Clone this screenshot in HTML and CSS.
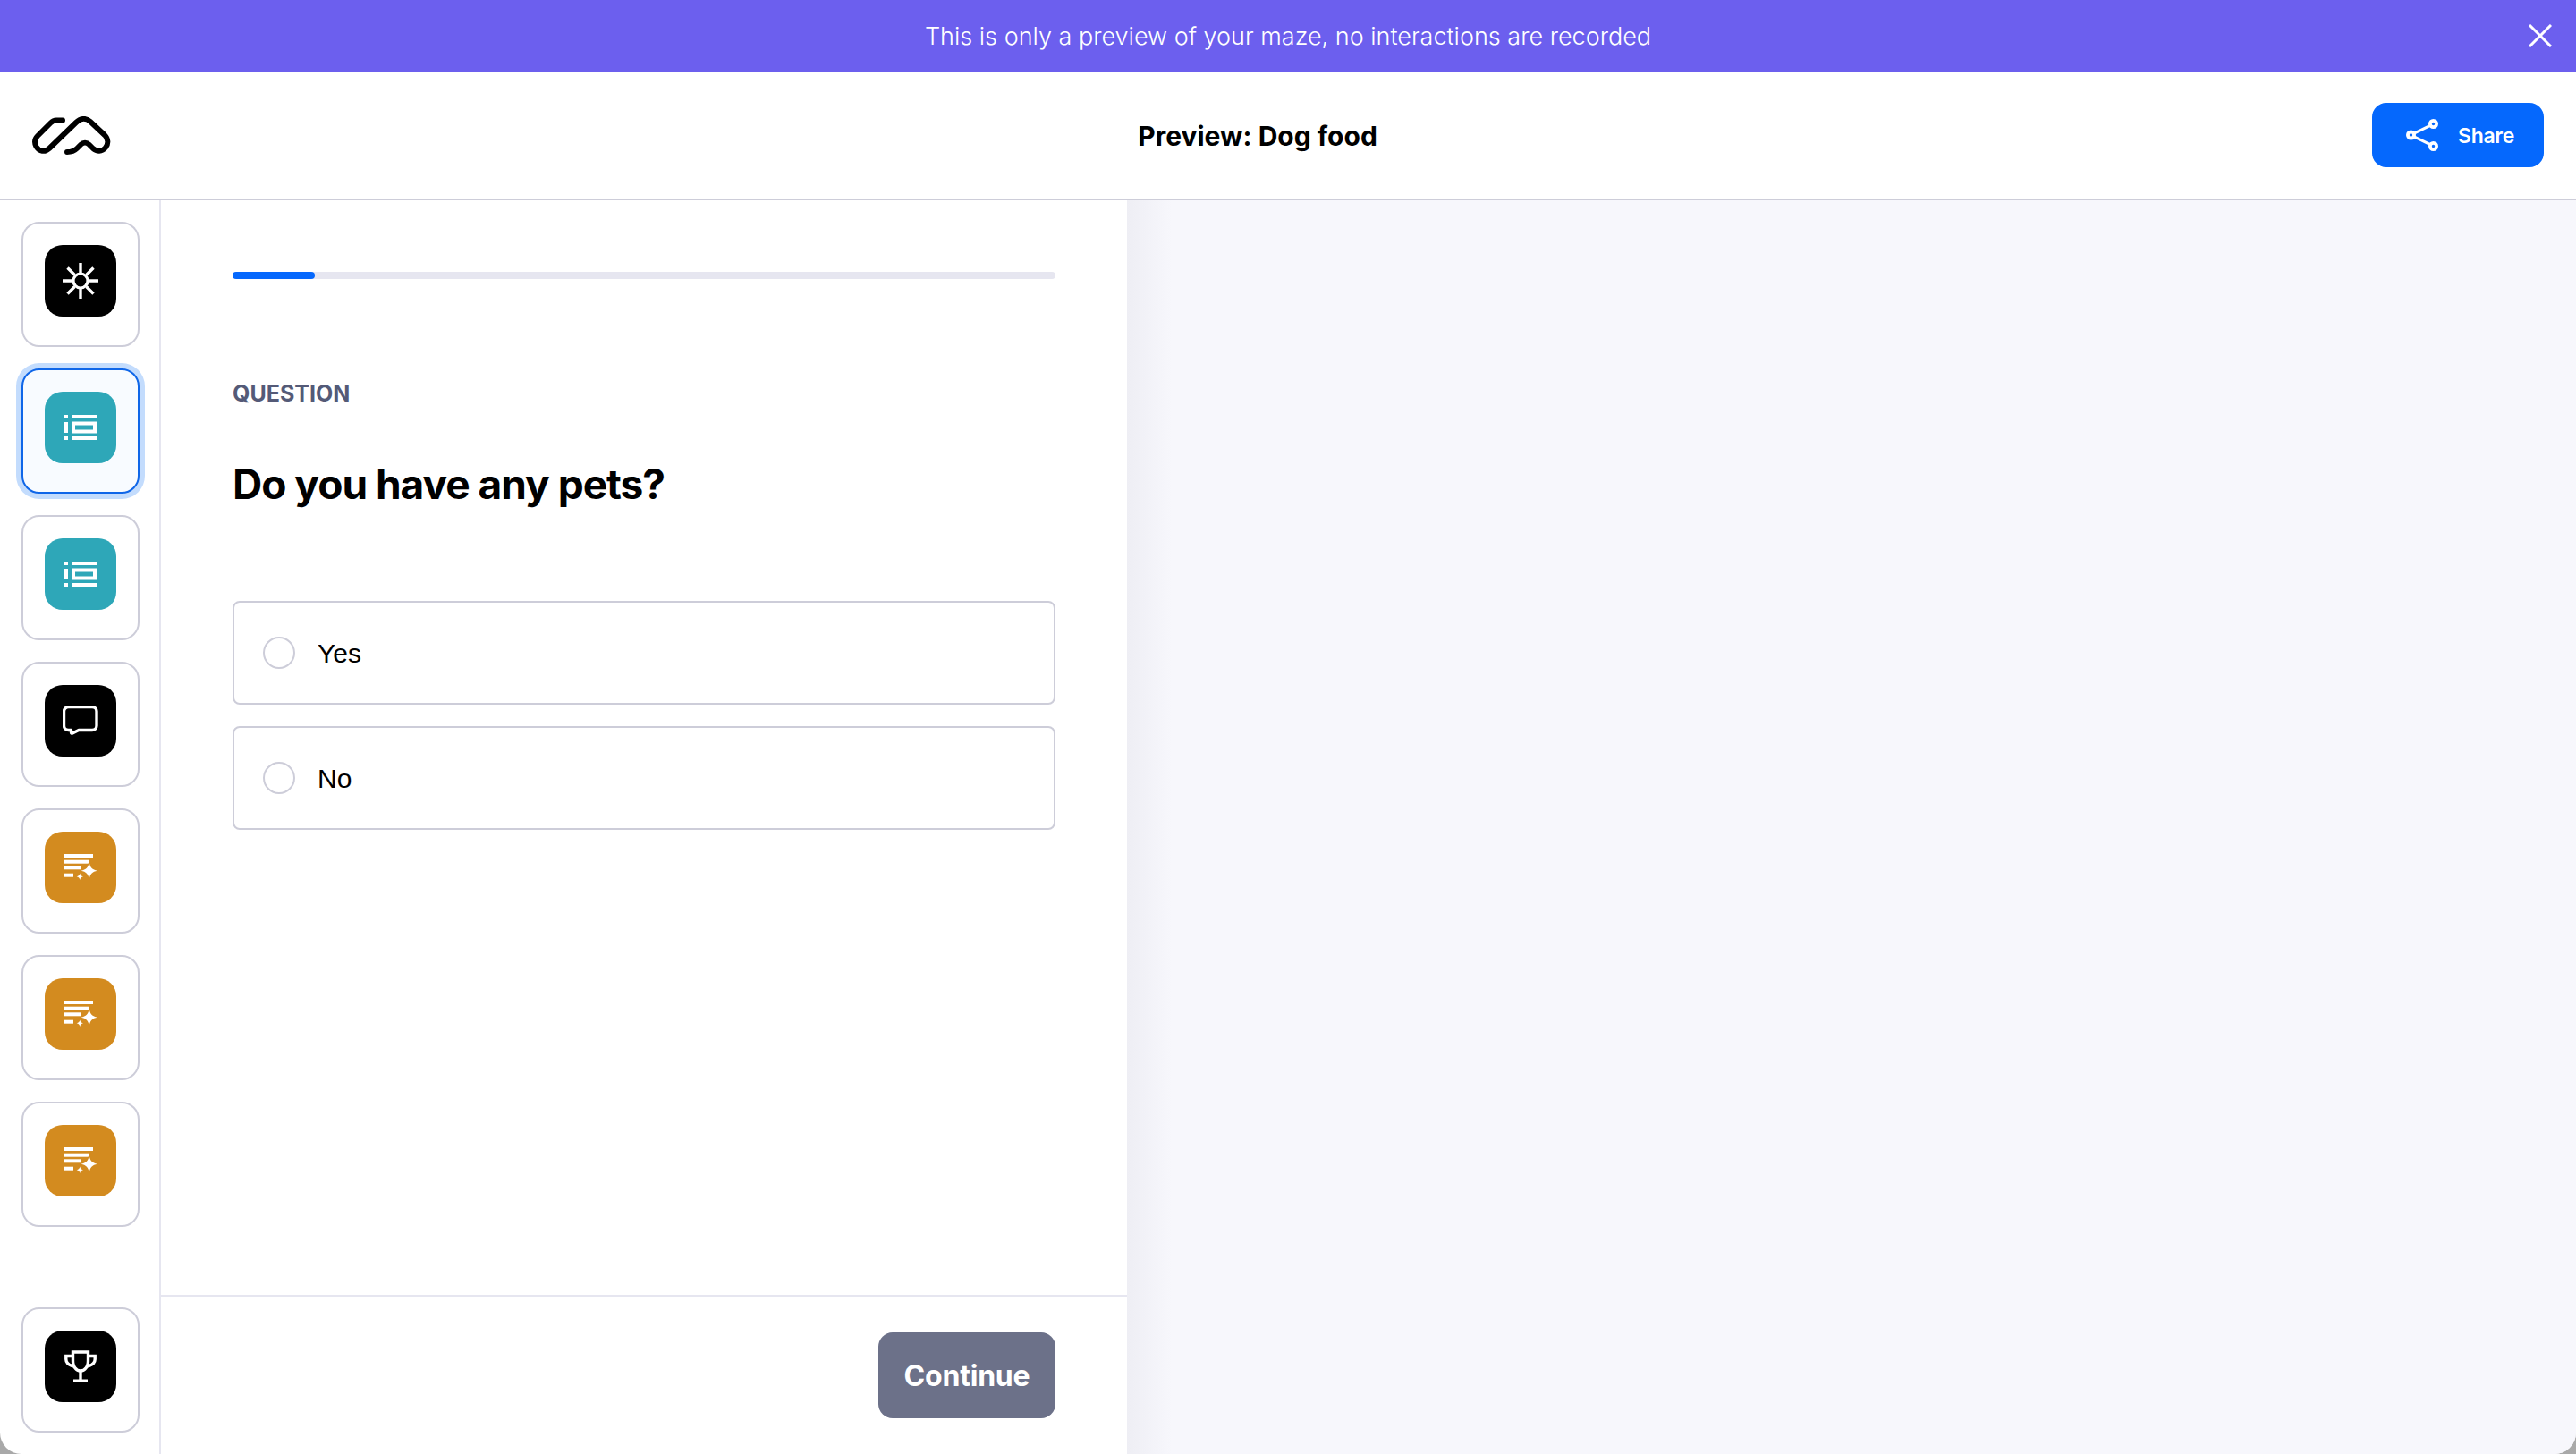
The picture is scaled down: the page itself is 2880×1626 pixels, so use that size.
FILE: index.html
```html
<!DOCTYPE html>
<html lang="en">
<head>
  <meta charset="UTF-8" />
  <meta name="viewport" content="width=device-width, initial-scale=1.0" />
  <title>Preview: Dog food</title>
  <link rel="stylesheet" href="styles.css">
</head>
<body>
  <div class="window">
    <div class="banner">
      <span>This is only a preview of your maze, no interactions are recorded</span>
      <button class="close" aria-label="Close">
        <svg viewBox="0 0 26 26" width="26" height="26"><path d="M1 1 25 25M25 1 1 25" stroke="#fff" stroke-width="3" fill="none"/></svg>
      </button>
    </div>

    <header class="topbar">
      <div class="logo">
        <svg viewBox="0 0 88 43" width="88" height="43">
          <path d="M34 4.500H27C24 4.500 22.500 5.500 20.500 7.500L6 22C2.500 25.500 2.500 30 4.500 34C8 39.500 14 40.500 19 36L49 7C54 2 60 1.500 65 6L81 21C85 25 85.500 31 82 35C78 40 72 39.500 68 36L63.500 31.500C61 29 57 29 54.500 31.500L50 36C47 39 44 40 39 40" fill="none" stroke="#000" stroke-width="6" stroke-linecap="round" stroke-linejoin="round"/>
        </svg>
      </div>
      <div class="page-title">Preview: Dog food</div>
      <button class="share">
        <svg viewBox="0 0 36 36" width="36" height="36">
          <g fill="none" stroke="#fff">
            <path d="M9 16.200 27 7.300M9 19.800l18 8.900" stroke-width="3"/>
            <g stroke-width="3.800">
              <circle cx="5.500" cy="18" r="3.600"/>
              <circle cx="30.500" cy="5.500" r="3.600"/>
              <circle cx="30.500" cy="30.500" r="3.600"/>
            </g>
          </g>
        </svg>
        <span class="share-label">Share</span>
      </button>
    </header>

    <div class="main">
      <nav class="steps">
        <div class="step">
          <div class="step-icon black">
            <svg viewBox="0 0 40 40" width="40" height="40">
              <circle cx="20" cy="20" r="8" fill="none" stroke="#fff" stroke-width="3.2"/>
              <path d="M20 0v11M20 29v11M0 20h11M29 20h11M5.500 5.500l8 8M26.500 26.500l8 8M34.500 5.500l-8 8M13.500 26.500l-8 8" stroke="#fff" stroke-width="3.400"/>
            </svg>
          </div>
        </div>
        <div class="step active">
          <div class="step-icon teal">
            <svg viewBox="0 0 36 28" width="36" height="28">
              <g fill="#fff">
                <rect x="0" y="0" width="4" height="4"/>
                <rect x="0" y="8" width="4" height="12"/>
                <rect x="0" y="24" width="4" height="4"/>
                <rect x="8" y="0" width="28" height="4"/>
                <rect x="8" y="24" width="28" height="4"/>
              </g>
              <rect x="10" y="9.500" width="24" height="9" fill="none" stroke="#fff" stroke-width="4"/>
            </svg>
          </div>
        </div>
        <div class="step">
          <div class="step-icon teal">
            <svg viewBox="0 0 36 28" width="36" height="28">
              <g fill="#fff">
                <rect x="0" y="0" width="4" height="4"/>
                <rect x="0" y="8" width="4" height="12"/>
                <rect x="0" y="24" width="4" height="4"/>
                <rect x="8" y="0" width="28" height="4"/>
                <rect x="8" y="24" width="28" height="4"/>
              </g>
              <rect x="10" y="9.500" width="24" height="9" fill="none" stroke="#fff" stroke-width="4"/>
            </svg>
          </div>
        </div>
        <div class="step">
          <div class="step-icon black">
            <svg viewBox="0 0 40 34" width="40" height="34">
              <path d="M7 1.500H33a5 5 0 0 1 5 5V22.500a5 5 0 0 1-5 5H18L11 31c-.8.400-1.500 0-1.500-1V27.500H6.500a5 5 0 0 1-5-5V6.500a5 5 0 0 1 5-5z" fill="none" stroke="#fff" stroke-width="3.400" stroke-linejoin="round"/>
            </svg>
          </div>
        </div>
        <div class="step">
          <div class="step-icon amber">
            <svg viewBox="0 0 38 30" width="38" height="30">
              <g fill="#fff">
                <rect x="0" y="0" width="33" height="4"/>
                <rect x="0" y="6.700" width="28" height="4"/>
                <rect x="0" y="13.300" width="19" height="4"/>
                <rect x="0" y="21.700" width="11" height="4"/>
                <path d="M18.300 21.600c.4 2.300 1.400 3.300 3.700 3.700-2.300.4-3.300 1.400-3.700 3.700-.4-2.300-1.400-3.300-3.700-3.700 2.300-.4 3.300-1.400 3.700-3.700z"/>
                <path d="M28.700 9.300c1 5.700 3.300 8.400 9.300 9.400-6 1-8.300 3.700-9.300 9.400-1-5.700-3.300-8.400-9.300-9.400 6-1 8.300-3.700 9.300-9.400z" stroke="#d38b1f" stroke-width="1.200" paint-order="stroke"/>
              </g>
            </svg>
          </div>
        </div>
        <div class="step">
          <div class="step-icon amber">
            <svg viewBox="0 0 38 30" width="38" height="30">
              <g fill="#fff">
                <rect x="0" y="0" width="33" height="4"/>
                <rect x="0" y="6.700" width="28" height="4"/>
                <rect x="0" y="13.300" width="19" height="4"/>
                <rect x="0" y="21.700" width="11" height="4"/>
                <path d="M18.300 21.600c.4 2.300 1.400 3.300 3.700 3.700-2.300.4-3.300 1.400-3.700 3.700-.4-2.300-1.400-3.300-3.700-3.700 2.300-.4 3.300-1.400 3.700-3.700z"/>
                <path d="M28.700 9.300c1 5.700 3.300 8.400 9.300 9.400-6 1-8.300 3.700-9.300 9.400-1-5.700-3.300-8.400-9.300-9.400 6-1 8.300-3.700 9.300-9.400z" stroke="#d38b1f" stroke-width="1.200" paint-order="stroke"/>
              </g>
            </svg>
          </div>
        </div>
        <div class="step">
          <div class="step-icon amber">
            <svg viewBox="0 0 38 30" width="38" height="30">
              <g fill="#fff">
                <rect x="0" y="0" width="33" height="4"/>
                <rect x="0" y="6.700" width="28" height="4"/>
                <rect x="0" y="13.300" width="19" height="4"/>
                <rect x="0" y="21.700" width="11" height="4"/>
                <path d="M18.300 21.600c.4 2.300 1.400 3.300 3.700 3.700-2.300.4-3.300 1.400-3.700 3.700-.4-2.300-1.400-3.300-3.700-3.700 2.300-.4 3.300-1.400 3.700-3.700z"/>
                <path d="M28.700 9.300c1 5.700 3.300 8.400 9.300 9.400-6 1-8.300 3.700-9.300 9.400-1-5.700-3.300-8.400-9.300-9.400 6-1 8.300-3.700 9.300-9.400z" stroke="#d38b1f" stroke-width="1.200" paint-order="stroke"/>
              </g>
            </svg>
          </div>
        </div>
        <div class="step last">
          <div class="step-icon black">
            <svg viewBox="0 0 36 36" width="36" height="36">
              <g fill="none" stroke="#fff" stroke-width="3.400">
                <path d="M9.500 2H26.500V12C26.500 18 23 23 18 23C13 23 9.500 18 9.500 12Z"/>
                <path d="M9.500 6.500H1.800V10C1.800 14 4.500 16.500 10 18M26.500 6.500H34.200V10C34.200 14 31.500 16.500 26 18"/>
                <path d="M18 23V34M10 34.300H26"/>
              </g>
            </svg>
          </div>
        </div>
      </nav>

      <section class="panel">
        <div class="panel-body">
          <div class="progress"><div class="progress-fill"></div></div>
          <div class="eyebrow">QUESTION</div>
          <h1 class="question">Do you have any pets?</h1>
          <div class="options">
            <label class="option"><span class="radio"></span><span class="option-text">Yes</span></label>
            <label class="option"><span class="radio"></span><span class="option-text">No</span></label>
          </div>
        </div>
        <div class="panel-footer">
          <button class="continue">Continue</button>
        </div>
      </section>

      <div class="preview"></div>
    </div>
  </div>
</body>
</html>
```

FILE: styles.css
```css
html, body {
  margin: 0;
  padding: 0;
  height: 100%;
}
body {
  background: #a9a9a9;
  font-family: Inter, Arial, sans-serif;
  color: #000;
  overflow: hidden;
}
button {
  font-family: inherit;
  border: none;
  cursor: pointer;
}
.window {
  height: 1626px;
  display: flex;
  flex-direction: column;
  background: #fff;
  border-radius: 0 0 24px 24px;
  overflow: hidden;
}
.banner {
  position: relative;
  height: 80px;
  flex: none;
  display: flex;
  align-items: center;
  justify-content: center;
  background: #6c5fee;
  color: #fff;
  font-size: 27px;
  font-weight: 300;
}
.close {
  position: absolute;
  right: 27px;
  top: 27px;
  width: 26px;
  height: 26px;
  padding: 0;
  background: none;
  display: flex;
}
.topbar {
  height: 144px;
  flex: none;
  box-sizing: border-box;
  display: flex;
  align-items: center;
  justify-content: space-between;
  padding: 0 36px;
  border-bottom: 2px solid #cdcdd9;
}
.logo {
  width: 124px;
  display: flex;
}
.page-title {
  font-size: 30px;
  font-weight: 700;
  margin-top: 2px;
}
.share {
  width: 192px;
  height: 72px;
  display: flex;
  align-items: center;
  gap: 22px;
  padding: 0 0 0 38px;
  background: #0568fd;
  color: #fff;
  border-radius: 16px;
  font-size: 23px;
  font-weight: 600;
  letter-spacing: -0.3px;
}
.share-label {
  margin-top: 2px;
}
.main {
  flex: 1;
  min-height: 0;
  display: flex;
}
.steps {
  width: 180px;
  flex: none;
  box-sizing: border-box;
  display: flex;
  flex-direction: column;
  gap: 24px;
  padding: 24px 22px 24px 24px;
  border-right: 2px solid #e6e6f0;
}
.step {
  height: 140px;
  flex: none;
  box-sizing: border-box;
  display: flex;
  justify-content: center;
  padding-top: 24px;
  border: 2px solid #cdcdd9;
  border-radius: 20px;
}
.step.active {
  background: #f8fbff;
  border-color: #0f66e8;
  box-shadow: 0 0 0 6px #c3dcfd;
}
.step.last {
  margin-top: auto;
}
.step-icon {
  width: 80px;
  height: 80px;
  display: flex;
  align-items: center;
  justify-content: center;
  border-radius: 20px;
}
.black { background: #000; }
.teal { background: #2ea7b8; }
.amber { background: #d38b1f; }
.panel {
  width: 1080px;
  flex: none;
  display: flex;
  flex-direction: column;
  background: #fff;
}
.panel-body {
  flex: 1;
  padding: 80px 80px 0;
}
.progress {
  height: 8px;
  background: #e6e6f0;
  border-radius: 4px;
}
.progress-fill {
  width: 92px;
  height: 8px;
  background: #0568fd;
  border-radius: 4px;
}
.eyebrow {
  margin-top: 112px;
  font-size: 25px;
  line-height: 32px;
  font-weight: 700;
  color: #545a77;
}
.question {
  margin: 57px 0 0;
  font-size: 46px;
  line-height: 56px;
  font-weight: 700;
  letter-spacing: -1px;
}
.options {
  margin-top: 103px;
  display: flex;
  flex-direction: column;
  gap: 24px;
}
.option {
  height: 116px;
  box-sizing: border-box;
  display: flex;
  align-items: center;
  gap: 25px;
  padding-left: 32px;
  border: 2px solid #cdcdd9;
  border-radius: 8px;
  font-family: "Liberation Sans", Arial, sans-serif;
  font-size: 30px;
}
.option-text {
  margin-top: 2px;
}
.radio {
  width: 36px;
  height: 36px;
  box-sizing: border-box;
  border: 2px solid #cdcdd9;
  border-radius: 50%;
}
.panel-footer {
  height: 178px;
  flex: none;
  box-sizing: border-box;
  display: flex;
  justify-content: flex-end;
  align-items: flex-start;
  padding: 40px 80px 0;
  border-top: 2px solid #e6e6f0;
}
.continue {
  width: 198px;
  height: 96px;
  background: #6c7189;
  color: #fff;
  border-radius: 16px;
  font-size: 32px;
  font-weight: 700;
  letter-spacing: -0.2px;
}
.preview {
  flex: 1;
  background: linear-gradient(90deg, #eeeef4, #f7f7fc 50px);
}
```
